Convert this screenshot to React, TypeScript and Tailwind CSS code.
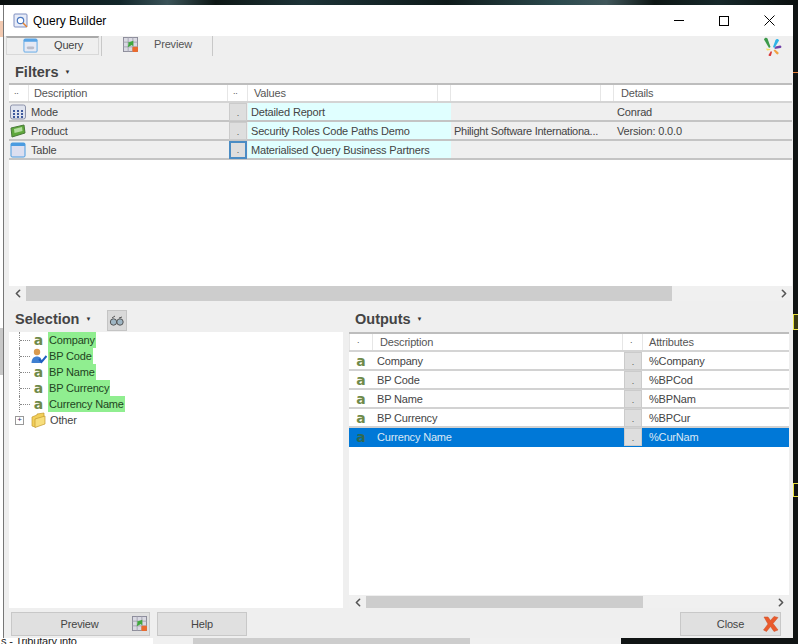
import { ChevronLeft, ChevronRight } from 'lucide-react';

const GridIcon = () => (
  <svg width="16" height="16" viewBox="0 0 16 16">
    <rect x="0.5" y="1" width="15" height="14" rx="2" fill="#dfe3ee" stroke="#8d93ab" />
    {[3, 7, 11].map((x) =>
      [6, 9, 12].map((y) => <rect key={`${x}-${y}`} x={x} y={y} width="2" height="2" fill="#3f5a9c" />)
    )}
  </svg>
);

const ProductIcon = () => (
  <svg width="16" height="16" viewBox="0 0 16 16">
    <path d="M1 5l13-3 1 8-13 4z" fill="#5fa83c" stroke="#4a7a3a" />
    <path d="M4 6l8-2 .5 4-8 2z" fill="#b4dca0" />
  </svg>
);

const TableIcon = () => (
  <svg width="16" height="16" viewBox="0 0 16 16">
    <rect x="0.5" y="0.5" width="15" height="15" rx="2" fill="#4a9be0" />
    <rect x="1.5" y="4" width="13" height="10.5" fill="#dcdff0" />
  </svg>
);

const QueryTabIcon = () => (
  <svg width="15" height="15" viewBox="0 0 16 16">
    <rect x="0.5" y="0.5" width="15" height="15" rx="2" fill="#5aa5e6" />
    <rect x="1.5" y="4" width="13" height="10.5" fill="#e6e9f4" />
    <rect x="4" y="9" width="8" height="3" rx="1.5" fill="#b9bcc9" />
  </svg>
);

const PreviewIcon = () => (
  <svg width="15" height="15" viewBox="0 0 16 16">
    <rect x="0.5" y="0.5" width="15" height="15" fill="#d9d9e2" stroke="#8a8a98" />
    <path d="M5.500 0.500v15M10.500 0.500v15M0.500 5.500h15M0.500 10.500h15" stroke="#a5a5b2" />
    <path d="M5 11l1-4-1-1 6-2v6l-1.500-1.500z" fill="#3fa83c" />
    <rect x="10" y="10.500" width="6" height="5.500" rx="1" fill="#ea6a2e" />
  </svg>
);

const LetterIcon = ({ selected = false }: { selected?: boolean }) => (
  <span className={`w-[14px] text-center text-[14px] leading-none font-bold font-['DejaVu_Sans',sans-serif] ${selected ? 'text-[#2f6a50]' : 'text-[#6f8a4a]'}`}>
    a
  </span>
);

const UserIcon = () => (
  <svg width="16" height="16" viewBox="0 0 16 16">
    <circle cx="6" cy="4" r="3.200" fill="#d99a4e" />
    <path d="M0.500 15c0-4.500 2.500-6.500 5.500-6.500s5 2 5 6.500z" fill="#3f7fd0" />
    <path d="M8 11l2.500 3L15.500 8" fill="none" stroke="#1f5fc0" strokeWidth="2" />
  </svg>
);

const FolderIcon = () => (
  <svg width="16" height="16" viewBox="0 0 16 16">
    <path d="M1 5l5-2 0-1 7-1v10l-9 4-3-1z" fill="#f2cf5a" stroke="#c49a2c" strokeWidth="0.700" />
    <path d="M4 7l10-3v8l-10 3.500z" fill="#f7de7d" stroke="#c49a2c" strokeWidth="0.700" />
  </svg>
);

const Logo = () => (
  <svg width="19" height="20" viewBox="0 0 19 20">
    <path d="M1 2.500C1.500 .5 3.500 0 4.500 1.500L7.500 10 6 11z" fill="#3c9a4a" />
    <path d="M10 10l2.500-7c1-1.500 3-1 3.500.5L11.500 11z" fill="#2fb3e6" />
    <path d="M11.500 12l1-2.500 4.500-1c1.500 0 2 2 .5 2.500z" fill="#7040a8" />
    <path d="M10.500 13.500l1.500-1 3.500 3c.5 1.500-1 2.500-2 1.500z" fill="#f0a040" />
    <path d="M8 14l1 1-1 3.500c-.5 1-2.500 .5-2.500-.5z" fill="#d83a3a" />
    <path d="M3 11.500l4 .5.500 1-3.500 .5z" fill="#f4e060" />
  </svg>
);

const DotButton = ({ focused = false }: { focused?: boolean }) => (
  <div
    className={`w-[18px] h-[18px] flex items-end justify-center bg-[#dedede] border text-[9px] leading-[13px] text-[#555] ${
      focused ? 'border-[#4a8cc4] border-2' : 'border-[#cbcbcb]'
    }`}
  >
    .
  </div>
);

const SectionTitle = ({ title, width, height }: { title: string; width: string; height: string }) => (
  <div className={`flex items-center pt-[7px] pl-[6px] ${width} ${height}`}>
    <span className="text-[14.5px] tracking-normal font-bold text-[#444]">{title}</span>
    <span className="ml-[6px] mb-[1px] text-[6px] text-[#333]">▼</span>
  </div>
);

const Scrollbar = ({ thumb, className = '' }: { thumb: string; className?: string }) => (
  <div className={`flex items-center bg-[#f0f0f0] ${className}`}>
    <ChevronLeft size={13} strokeWidth={3} className="text-[#555] ml-[1px] w-[16px] shrink-0" />
    <div className="flex-1 h-full">
      <div className={`h-full bg-[#cdcdcd] ${thumb}`} />
    </div>
    <ChevronRight size={13} strokeWidth={3} className="text-[#555] w-[16px] shrink-0" />
  </div>
);

const filterRows = [
  { icon: <GridIcon />, name: 'Mode', value: 'Detailed Report', extra: '', details: 'Conrad' },
  { icon: <ProductIcon />, name: 'Product', value: 'Security Roles Code Paths Demo', extra: 'Philight Software Internationa...', details: 'Version: 0.0.0' },
  { icon: <TableIcon />, name: 'Table', value: 'Materialised Query Business Partners', extra: '', details: '', focused: true },
];

const FiltersTable = () => (
  <div className="border-t-2 border-[#bdbdbd] bg-white">
    <div className="flex h-[18px] items-center border-b-2 border-[#d4d4d4] bg-white text-[#555]">
      <div className="w-[20px] h-full border-r border-[#e6e6e6] pl-[5px] text-[9px]">..</div>
      <div className="w-[199px] h-full border-r border-[#e6e6e6] pl-[5px]">Description</div>
      <div className="w-[20px] h-full border-r border-[#e6e6e6] pl-[5px] text-[9px]">..</div>
      <div className="w-[190px] h-full border-r border-[#e6e6e6] pl-[6px]">Values</div>
      <div className="w-[13px] h-full border-r border-[#e6e6e6]" />
      <div className="w-[150px] h-full border-r border-[#e6e6e6]" />
      <div className="w-[13px] h-full border-r border-[#e6e6e6]" />
      <div className="flex-1 h-full pl-[7px]">Details</div>
    </div>
    {filterRows.map((row) => (
      <div key={row.name} className="flex h-[19px] items-center border-b-2 border-[#c4c4c4] bg-[#efefef] text-[#444]">
        <div className="w-[20px] pl-[1px] shrink-0 flex">{row.icon}</div>
        <div className="w-[199px] shrink-0 pl-[2px] pt-[2px]">{row.name}</div>
        <div className="w-[20px] shrink-0 flex justify-center"><DotButton focused={row.focused} /></div>
        <div className="w-[203px] shrink-0 h-full bg-[#e0ffff] pl-[3px] leading-[19px]">{row.value}</div>
        <div className="w-[166px] shrink-0 pl-[3px] pt-[2px] whitespace-nowrap tracking-[-0.27px]">{row.extra}</div>
        <div className="flex-1 pt-[2px]">{row.details}</div>
      </div>
    ))}
  </div>
);

const selection = [
  { name: 'Company', icon: <LetterIcon /> },
  { name: 'BP Code', icon: <UserIcon /> },
  { name: 'BP Name', icon: <LetterIcon /> },
  { name: 'BP Currency', icon: <LetterIcon /> },
  { name: 'Currency Name', icon: <LetterIcon /> },
];

const outputs = [
  { name: 'Company', attr: '%Company' },
  { name: 'BP Code', attr: '%BPCod' },
  { name: 'BP Name', attr: '%BPNam' },
  { name: 'BP Currency', attr: '%BPCur' },
  { name: 'Currency Name', attr: '%CurNam', selected: true },
];

const App = () => (
  <div className="flex flex-col w-[798px] h-[644px] overflow-hidden bg-[#101414] font-['Liberation_Sans',sans-serif] text-[11px] tracking-[-0.17px]">
    {/* desktop behind the window */}
    <div className="h-[5px] shrink-0 bg-[linear-gradient(90deg,#0a0f0e_0%,#12262a_15%,#3a5358_21%,#0d1715_27%,#1d3337_38%,#0e1a1a_56%,#2c4a4e_70%,#40565a_76%,#0d1614_82%,#16282a_90%,#0a0f0e_100%)]" />
    <div className="flex h-[633px] shrink-0">
      <div className="w-[3px] shrink-0 bg-white flex flex-col">
        <div className="h-[16px] mt-[16px] bg-[#f2c9b0]" />
        <div className="h-[47px] mt-[291px] bg-[#c8c8c8]" />
      </div>
      <div className="w-[790px] shrink-0 flex flex-col bg-[#efefef] border-l border-[#777]">
        {/* title bar */}
        <div className="flex items-center h-[31px] shrink-0 bg-white pl-[9px]">
          <svg width="16" height="16" viewBox="0 0 16 16">
            <rect x="1" y="1" width="13" height="13" rx="1" fill="#e8ecf8" stroke="#7f8fc0" />
            <circle cx="7.500" cy="7.500" r="3.200" fill="#fff" stroke="#4a78c0" strokeWidth="1.200" />
            <path d="M10 10l4 4" stroke="#e08030" strokeWidth="1.500" />
          </svg>
          <span className="ml-[4px] text-[12px] tracking-normal text-black">Query Builder</span>
          <div className="ml-auto flex items-center mr-[18px] gap-[35px]">
            <div className="w-[10px] h-px bg-black" />
            <div className="w-[10px] h-[10px] border border-black" />
            <svg width="11" height="11" viewBox="0 0 11 11"><path d="M0.500 0.500l10 10M10.500 0.500l-10 10" stroke="#000" strokeWidth="1" /></svg>
          </div>
        </div>
        {/* tabs */}
        <div className="flex h-[20px] shrink-0 relative">
          <div className="w-[93px] ml-[2px] h-[19px] flex items-center pb-[1px] border-t-2 border-[#aaa] border-x border-b border-x-[#d8d8d8] border-b-[#d8d8d8] pl-[16px] gap-[16px] text-[#444]">
            <QueryTabIcon />
            <span>Query</span>
          </div>
          <div className="w-[112px] ml-[2px] flex items-center pb-[3px] pl-[21px] gap-[16px] text-[#555] border-x border-[#c8c8c8]">
            <PreviewIcon />
            <span>Preview</span>
          </div>
          <div className="absolute right-[11px] top-[1px]"><Logo /></div>
        </div>
        {/* filters */}
        <div className="pl-[5px] pr-[1px] shrink-0">
          <SectionTitle title="Filters" width="w-[65px]" height="h-[27px]" />
          <FiltersTable />
          <div className="h-[126px] bg-white" />
          <Scrollbar thumb="w-[646px]" className="h-[15px]" />
        </div>
        {/* selection and outputs */}
        <div className="flex flex-1 min-h-0 pl-[5px] pr-[4px]">
          <div className="w-[334px] flex flex-col shrink-0">
            <div className="flex items-end">
              <SectionTitle title="Selection" width="w-[88px]" height="h-[31px]" />
              <div className="ml-[10px] mb-[1px] w-[20px] h-[21px] bg-[#d9d9d9] border border-[#c4c4c4] flex items-center justify-center">
                <svg width="16" height="12" viewBox="0 0 16 12"><circle cx="4.500" cy="7" r="3.200" fill="#9fb6c4" stroke="#555" /><circle cx="11" cy="7" r="3.200" fill="#9fb6c4" stroke="#555" /><path d="M3 3l3-2M10 3l3-1" stroke="#555" /></svg>
              </div>
            </div>
            <div className="flex-1 bg-white min-h-0">
              {selection.map(({ name, icon }) => (
                <div key={name} className="flex items-center h-[16px] pl-[10px]">
                  <div className="w-[11px] h-full flex items-center border-l border-dotted border-[#888]">
                    <div className="w-full border-t border-dotted border-[#888]" />
                  </div>
                  <div className="w-[17px] flex items-center justify-center">{icon}</div>
                  <span className="bg-[#90ee90] px-[1px] h-[16px] leading-[16px] text-[#224422] ml-[1px]">{name}</span>
                </div>
              ))}
              <div className="flex items-center h-[16px] pl-[6px]">
                <div className="w-[9px] h-[9px] border border-[#999] flex items-center justify-center text-[8px] leading-none text-[#336]">+</div>
                <div className="ml-[7px]"><FolderIcon /></div>
                <span className="ml-[3px] text-[#444]">Other</span>
              </div>
            </div>
          </div>
          <div className="ml-[6px] flex-1 flex flex-col min-w-0">
            <SectionTitle title="Outputs" width="w-[81px]" height="h-[31px]" />
            <div className="flex-1 bg-white border-t-2 border-[#bdbdbd] min-h-0">
              <div className="flex h-[18px] items-center border-b-2 border-[#d4d4d4] text-[#555]">
                <div className="w-[24px] h-full border-x border-[#e6e6e6] pl-[7px] text-[9px]">.</div>
                <div className="w-[250px] h-full border-r border-[#e6e6e6] pl-[7px]">Description</div>
                <div className="w-[20px] h-full border-r border-[#e6e6e6] pl-[7px] text-[9px]">.</div>
                <div className="flex-1 h-full pl-[6px]">Attributes</div>
              </div>
              {outputs.map(({ name, attr, selected }) => (
                <div key={name} className={`flex h-[19px] items-center border-b-2 ${selected ? 'bg-[#0078d7] text-[#dbe8f5] border-[#0078d7]' : 'bg-white text-[#444] border-[#d2d2d2]'}`}>
                  <div className="w-[28px] pl-[5px] shrink-0 flex"><LetterIcon selected={selected} /></div>
                  <div className="w-[246px] shrink-0 pt-[2px]">{name}</div>
                  <div className="w-[20px] shrink-0 flex justify-center"><DotButton /></div>
                  <div className="flex-1 pl-[6px] pt-[2px]">{attr}</div>
                </div>
              ))}
            </div>
            <Scrollbar thumb="w-[277px]" className="h-[12px] mt-[1px] shrink-0" />
          </div>
        </div>
        {/* footer */}
        <div className="h-[30px] shrink-0 flex items-start pt-[4px] pl-[7px] pr-[12px] text-[#444]">
          <div className="w-[139px] h-[24px] relative flex items-center justify-center bg-[#e0e0e0] border border-[#c8c8c8]">
            <span className="mr-[2px]">Preview</span>
            <div className="absolute right-[2px] top-[3px]"><PreviewIcon /></div>
          </div>
          <div className="ml-[7px] w-[90px] h-[24px] flex items-center justify-center bg-[#e0e0e0] border border-[#c8c8c8]">Help</div>
          <div className="ml-auto w-[101px] h-[24px] relative flex items-center justify-center bg-[#e0e0e0] border border-[#c8c8c8]">
            <span>Close</span>
            <svg className="absolute right-[1px] top-[2px]" width="17" height="17" viewBox="0 0 17 17"><path d="M2 2h4l2.500 3.500L12 1.500l4 1-5 6 5 6.500-4 1.500-3.500-5-4 5-3-1.500 4.500-6z" fill="#ea5a2c" stroke="#c84a20" strokeWidth="0.500" /></svg>
          </div>
        </div>
      </div>
      <div className="w-[5px] shrink-0 flex flex-col">
        <div className="h-[1px] mt-[67px] bg-[#e8803c]" />
        <div className="h-[16px] mt-[241px] border-y border-l border-[#e8e040] bg-[#3a3a10]" />
        <div className="h-[14px] mt-[153px] border-y border-l border-[#e8e040]" />
      </div>
    </div>
    {/* other windows peeking out below */}
    <div className="flex h-[6px] shrink-0 overflow-hidden">
      <div className="w-[153px] bg-white text-[#222] leading-[7px] pl-[1px] whitespace-nowrap">s - Tributary info</div>
      <div className="w-[40px] bg-[#f0f0f0]" />
      <div className="w-[277px] bg-[#cdcdcd]" />
      <div className="w-[151px] bg-[#f0f0f0]" />
    </div>
  </div>
);

export default App;
